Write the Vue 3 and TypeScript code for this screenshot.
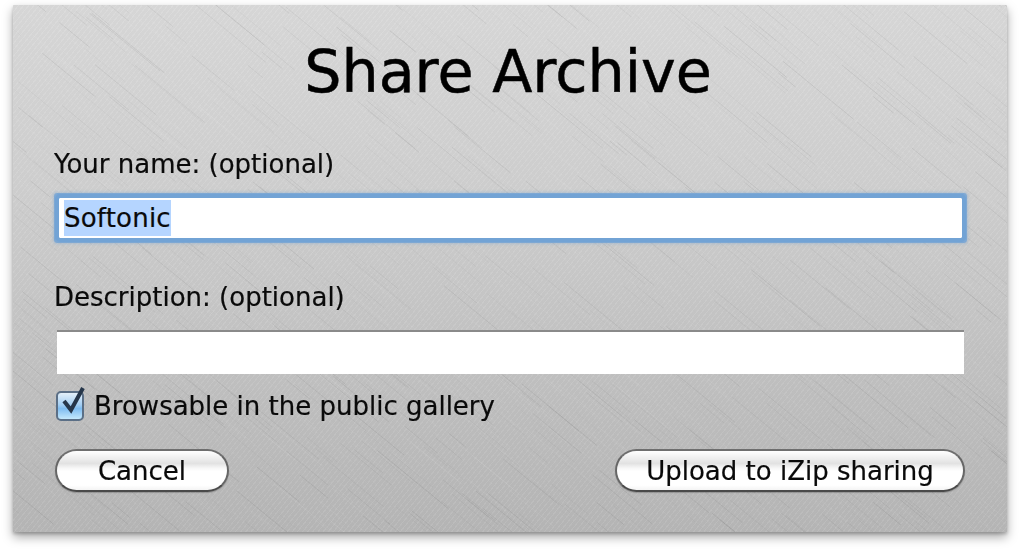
<template>
  <div class="page">
    <div class="sheet">
      <svg class="brushed" width="994" height="527" viewBox="0 0 994 527" aria-hidden="true">
        <line
          v-for="(s, i) in streaks"
          :key="i"
          :x1="s.x"
          :y1="s.y"
          :x2="s.x + s.len"
          :y2="s.y + s.len * 0.82"
          :stroke="s.light ? '#fff' : '#000'"
          :stroke-opacity="s.alpha"
          stroke-width="0.8"
        />
      </svg>

      <h1 class="title">Share Archive</h1>

      <label class="field-label first">Your name: (optional)</label>
      <div class="text-field focused">
        <span class="selected">Softonic</span>
      </div>

      <label class="field-label second">Description: (optional)</label>
      <div class="text-field plain"></div>

      <div class="check-row">
        <span class="checkbox">
          <svg class="tick" width="32" height="34" viewBox="0 0 32 34" aria-hidden="true">
            <path d="M9 17 L16 26 L28 4" fill="none" stroke="#26364a" stroke-width="4" stroke-linejoin="miter" />
          </svg>
        </span>
        <span class="check-text">Browsable in the public gallery</span>
      </div>

      <div class="actions">
        <button class="pill cancel" type="button">Cancel</button>
        <button class="pill upload" type="button">Upload to iZip sharing</button>
      </div>
    </div>
  </div>
</template>

<script setup lang="ts">
interface Streak {
  x: number
  y: number
  len: number
  light: boolean
  alpha: number
}

// brushed metal: small seeded generator so the texture stays the same on each load
let seed = 1337
const rnd = () => {
  seed = (seed * 16807) % 2147483647
  return seed / 2147483647
}

const streaks: Streak[] = Array.from({ length: 2600 }, () => ({
  x: rnd() * 1100 - 100,
  y: rnd() * 600 - 80,
  len: 15 + rnd() * 60,
  light: rnd() > 0.3,
  alpha: 0.02 + rnd() * 0.07
}))
</script>

<style scoped>
.page {
  width: 1020px;
  height: 554px;
  padding: 5px 13px 0;
  box-sizing: border-box;
  background: #fff;
  overflow: hidden;
  font-family: "DejaVu Sans", sans-serif;
  color: #000;
}

.sheet {
  position: relative;
  width: 994px;
  height: 527px;
  padding: 0 42px;
  box-sizing: border-box;
  background:
    repeating-linear-gradient(129deg, rgba(255, 255, 255, 0.05) 0 1px, rgba(0, 0, 0, 0.015) 1px 4px),
    linear-gradient(180deg, #d9d9d9 0%, #d0d0d0 35%, #c0c0c0 75%, #b7b7b7 100%);
  box-shadow: 0 5px 10px rgba(0, 0, 0, 0.35), 0 2px 3px rgba(0, 0, 0, 0.2);
  filter: blur(0.55px);
}

.brushed {
  position: absolute;
  inset: 0;
}

.title,
.field-label,
.text-field,
.check-row,
.actions {
  position: relative;
}

.title {
  margin: 0;
  padding: 30px 4px 0 0;
  height: 94px;
  box-sizing: border-box;
  text-align: center;
  font-size: 58.7px;
  line-height: 74px;
  font-weight: 400;
  color: #000;
  -webkit-text-stroke: 0.5px #000;
}

.field-label {
  display: block;
  margin-left: -1px;
  font-size: 26px;
  line-height: 30px;
  color: #0a0a0a;
  -webkit-text-stroke: 0.2px #0a0a0a;
}

.first {
  margin-top: 50px;
}

.second {
  margin-top: 44px;
}

.text-field {
  display: flex;
  align-items: center;
  box-sizing: border-box;
  background: #fff;
  font-size: 26px;
  letter-spacing: 0.2px;
}

.focused {
  height: 40px;
  margin: 19px 3.5px 0;
  padding: 0 5.5px;
  outline: 4px solid #72a3d5;
  box-shadow: 0 0 0 5px rgba(114, 163, 213, 0.8), 0 0 3px 6px rgba(114, 163, 213, 0.35);
  border-radius: 1px;
}

.plain {
  height: 44px;
  margin: 18px 1px 0 2px;
  border-top: 2px solid #8a8a8a;
}

.selected {
  display: block;
  height: 36px;
  line-height: 36px;
  background: #b5d5ff;
  color: #0a0a0a;
  -webkit-text-stroke: 0.2px #0a0a0a;
}

.check-row {
  display: flex;
  align-items: center;
  gap: 10px;
  margin: 17px 0 0 1px;
  height: 30px;
  font-size: 26px;
  color: #0a0a0a;
  -webkit-text-stroke: 0.2px #0a0a0a;
}

.checkbox {
  position: relative;
  width: 24px;
  height: 26px;
  border: 2px solid #5b6f86;
  border-radius: 5px;
  background: linear-gradient(180deg, #e4f0fa 0%, #a5cff3 45%, #7fbcf0 60%, #c4e8fc 100%);
  -webkit-text-stroke: 0;
}

.tick {
  position: absolute;
  left: -3px;
  top: -9px;
}

.actions {
  display: flex;
  justify-content: space-between;
  margin: 28px 0 0;
}

.pill {
  height: 43px;
  padding: 0;
  border: 2px solid #666;
  border-top-color: #6e6e6e;
  border-bottom-color: #4a4a4a;
  border-radius: 22px;
  background: linear-gradient(180deg, #fff 0%, #f6f6f6 10%, #e2e2e2 32%, #f7f7f7 44%, #fff 52%, #fff 88%, #f4f4f4 100%);
  box-shadow: 0 1px 1px rgba(0, 0, 0, 0.2);
  font-family: inherit;
  font-size: 26px;
  color: #0a0a0a;
  -webkit-text-stroke: 0.2px #0a0a0a;
}

.cancel {
  width: 174px;
}

.upload {
  width: 350px;
}
</style>
